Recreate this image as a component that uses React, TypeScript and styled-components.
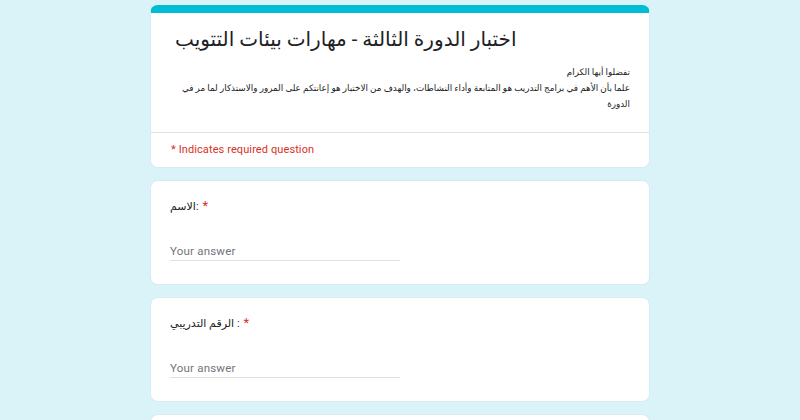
import React from 'react';
import styled, { createGlobalStyle } from 'styled-components';

const GlobalStyle = createGlobalStyle`
  html, body {
    margin: 0;
    padding: 0;
    background: #d9f3f8;
    font-family: Roboto, "DejaVu Sans", sans-serif;
    color: #202124;
  }
`

const Page = styled.div`
  width: 500px;
  margin: 0 auto;
  padding-top: 5px;
  display: flex;
  flex-direction: column;
  gap: 12px;
  height: 415px;
  overflow: hidden;
`

const Card = styled.div<{ $accent?: boolean }>`
  background: #fff;
  border-radius: 8px;
  border: 1px solid #d5ecf1;
  border-top: ${p => (p.$accent ? '8px solid #00bcd4' : '1px solid #d5ecf1')};
  box-sizing: border-box;
  flex-shrink: 0;
  overflow: hidden;
`

const Header = styled.div`
  padding: 10px 19px 20px 24px;
  border-bottom: 1px solid #e0e0e0;
`

const Title = styled.div`
  font-size: 20px;
  line-height: 32px;
  color: #202124;
`

const Description = styled.div`
  margin-top: 9px;
  direction: rtl;
  text-align: right;
  font-size: 8.8px;
  line-height: 16px;
  color: #202124;
`

const Line = styled.div`
  white-space: nowrap;
`

const Required = styled.div`
  padding: 9px 20px 9px;
  font-size: 11px;
  line-height: 16px;
  color: #d93025;
  letter-spacing: 0.1px;
`

const Question = styled(Card)`
  height: 105px;
  padding: 17px 19px 0;
`

const Label = styled.div`
  font-size: 11px;
  line-height: 16px;
  color: #202124;
`

const Star = styled.span`
  color: #d93025;
  margin-left: 4px;
  font-size: 13px;
`

const Answer = styled.div`
  margin-top: 28px;
  width: 230px;
  font-size: 11.5px;
  line-height: 16px;
  color: #70757a;
  letter-spacing: 0.2px;
  padding-bottom: 1px;
  border-bottom: 1px solid #e0e0e0;
`

export default function App() {
  return (
    <>
      <GlobalStyle />
      <Page>
        <Card $accent>
          <Header>
            <Title>اختبار الدورة الثالثة - مهارات بيئات التتويب</Title>
            <Description>
              <Line>تفضلوا أيها الكرام</Line>
              <Line>علما بأن الأهم في برامج التدريب هو المتابعة وأداء النشاطات، والهدف من الاختبار هو إعانتكم على المرور والاستذكار لما مر في</Line>
              <Line>الدورة</Line>
            </Description>
          </Header>
          <Required>* Indicates required question</Required>
        </Card>
        <Question>
          <Label>
            الاسم:<Star>*</Star>
          </Label>
          <Answer>Your answer</Answer>
        </Question>
        <Question>
          <Label>
            الرقم التدريبي :<Star>*</Star>
          </Label>
          <Answer>Your answer</Answer>
        </Question>
        <Question />
      </Page>
    </>
  );
}
